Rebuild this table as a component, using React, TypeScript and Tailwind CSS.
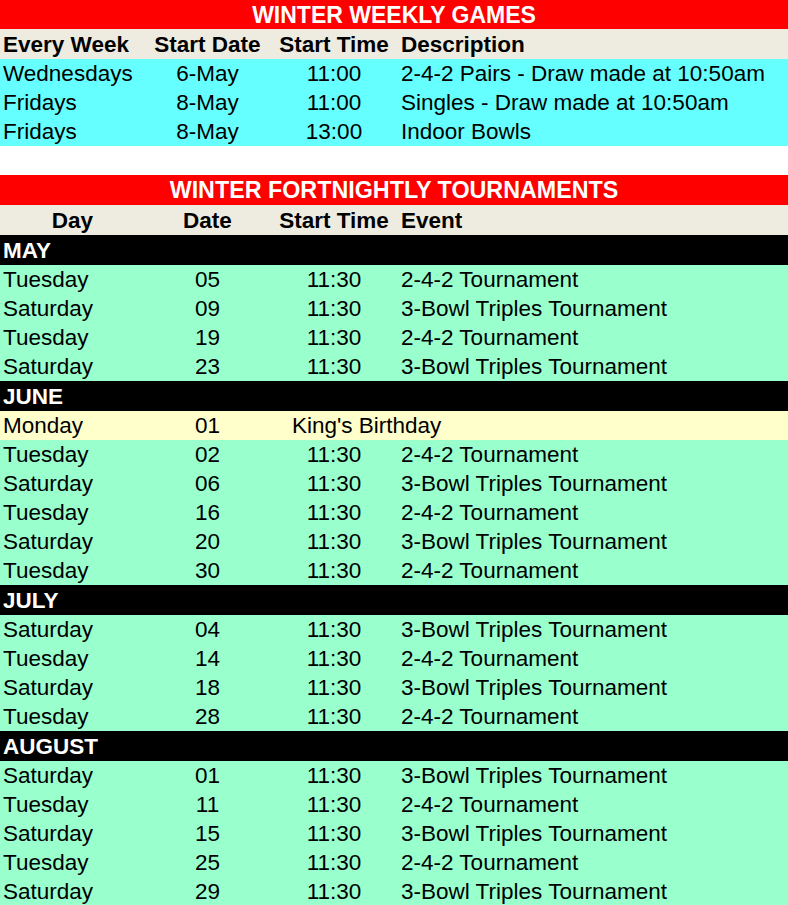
const weekly = [
  { day: "Wednesdays", date: "6-May", time: "11:00", desc: "2-4-2 Pairs - Draw made at 10:50am" },
  { day: "Fridays", date: "8-May", time: "11:00", desc: "Singles - Draw made at 10:50am" },
  { day: "Fridays", date: "8-May", time: "13:00", desc: "Indoor Bowls" },
];

type Row = { day: string; date: string; time?: string; event: string; holiday?: boolean };

const T242 = "2-4-2 Tournament";
const T3B = "3-Bowl Triples Tournament";

const months: { name: string; rows: Row[] }[] = [
  {
    name: "MAY",
    rows: [
      { day: "Tuesday", date: "05", time: "11:30", event: T242 },
      { day: "Saturday", date: "09", time: "11:30", event: T3B },
      { day: "Tuesday", date: "19", time: "11:30", event: T242 },
      { day: "Saturday", date: "23", time: "11:30", event: T3B },
    ],
  },
  {
    name: "JUNE",
    rows: [
      { day: "Monday", date: "01", event: "King's Birthday", holiday: true },
      { day: "Tuesday", date: "02", time: "11:30", event: T242 },
      { day: "Saturday", date: "06", time: "11:30", event: T3B },
      { day: "Tuesday", date: "16", time: "11:30", event: T242 },
      { day: "Saturday", date: "20", time: "11:30", event: T3B },
      { day: "Tuesday", date: "30", time: "11:30", event: T242 },
    ],
  },
  {
    name: "JULY",
    rows: [
      { day: "Saturday", date: "04", time: "11:30", event: T3B },
      { day: "Tuesday", date: "14", time: "11:30", event: T242 },
      { day: "Saturday", date: "18", time: "11:30", event: T3B },
      { day: "Tuesday", date: "28", time: "11:30", event: T242 },
    ],
  },
  {
    name: "AUGUST",
    rows: [
      { day: "Saturday", date: "01", time: "11:30", event: T3B },
      { day: "Tuesday", date: "11", time: "11:30", event: T242 },
      { day: "Saturday", date: "15", time: "11:30", event: T3B },
      { day: "Tuesday", date: "25", time: "11:30", event: T242 },
      { day: "Saturday", date: "29", time: "11:30", event: T3B },
    ],
  },
];

const cols = "grid grid-cols-[145px_125px_128px_1fr]";

export default function App() {
  return (
    <div className="w-[788px] h-[905px] overflow-hidden bg-white text-black text-[22.5px] whitespace-nowrap" style={{ fontFamily: '"Liberation Sans", Arial, sans-serif' }}>
      {/* weekly games */}
      <div className="h-[29px] bg-[#ff0000] text-white font-bold text-center text-[23px] leading-[30px]">WINTER WEEKLY GAMES</div>
      <div className={`${cols} h-[30px] leading-[31px] bg-[#eeece1] font-bold`}>
        <div className="pl-[3px]">Every Week</div>
        <div className="text-center">Start Date</div>
        <div className="text-center">Start Time</div>
        <div className="pl-[3px]">Description</div>
      </div>
      {weekly.map((w, i) => (
        <div key={i} className={`${cols} h-[29px] leading-[30px] bg-[#66ffff]`}>
          <div className="pl-[3px]">{w.day}</div>
          <div className="text-center">{w.date}</div>
          <div className="text-center">{w.time}</div>
          <div className="pl-[3px]">{w.desc}</div>
        </div>
      ))}
      <div className="h-[29px]" />

      {/* fortnightly tournaments */}
      <div className="h-[30px] bg-[#ff0000] text-white font-bold text-center text-[23.3px] leading-[31px]">WINTER FORTNIGHTLY TOURNAMENTS</div>
      <div className={`${cols} h-[30px] leading-[31px] bg-[#eeece1] font-bold`}>
        <div className="text-center">Day</div>
        <div className="text-center">Date</div>
        <div className="text-center">Start Time</div>
        <div className="pl-[3px]">Event</div>
      </div>
      {months.map((m) => (
        <div key={m.name}>
          <div className="h-[30px] leading-[31px] bg-black text-white font-bold pl-[3px]">{m.name}</div>
          {m.rows.map((r, i) =>
            r.holiday ? (
              <div key={i} className={`${cols} h-[29px] leading-[30px] bg-[#ffffcc]`}>
                <div className="pl-[3px]">{r.day}</div>
                <div className="text-center">{r.date}</div>
                <div className="col-span-2 pl-[22px]">{r.event}</div>
              </div>
            ) : (
              <div key={i} className={`${cols} h-[29px] leading-[30px] bg-[#99ffcc]`}>
                <div className="pl-[3px]">{r.day}</div>
                <div className="text-center">{r.date}</div>
                <div className="text-center">{r.time}</div>
                <div className="pl-[3px]">{r.event}</div>
              </div>
            )
          )}
        </div>
      ))}
    </div>
  );
}
